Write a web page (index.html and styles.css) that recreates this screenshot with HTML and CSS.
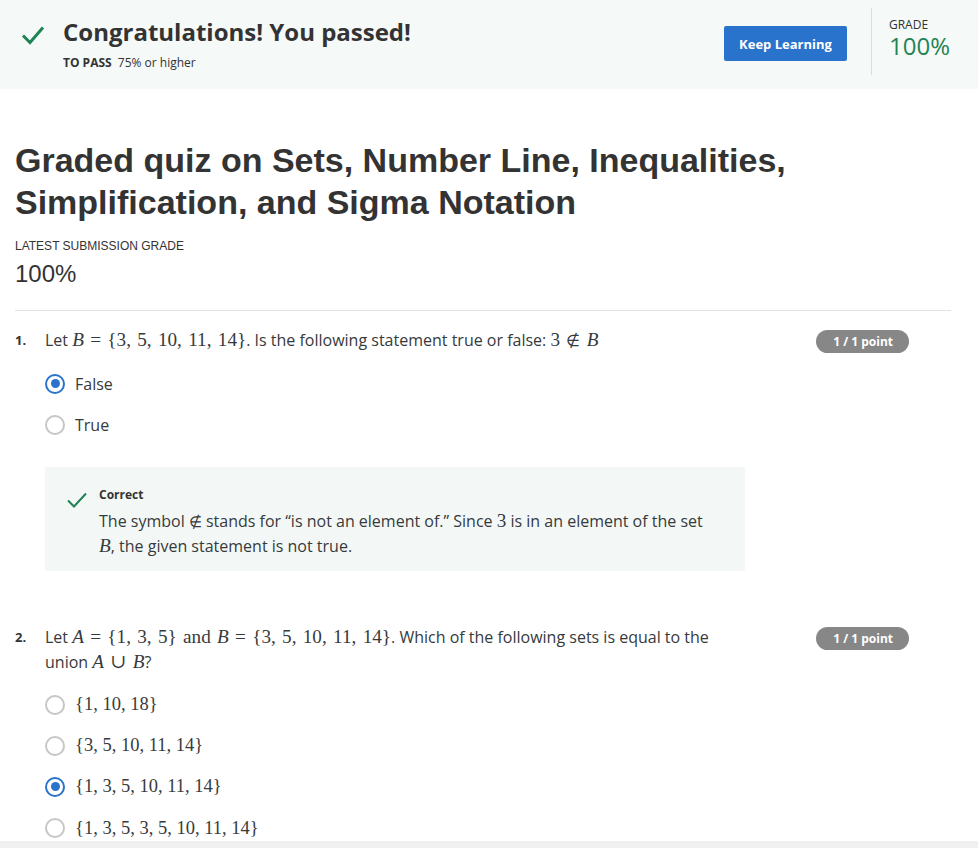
FILE: index.html
```html
<!DOCTYPE html>
<html lang="en">
<head>
<meta charset="utf-8">
<title>Graded quiz</title>
<link rel="stylesheet" href="styles.css">
</head>
<body>
<header class="banner">
  <div class="banner-main">
    <svg class="big-check" width="26" height="26" viewBox="0 0 26 26"><path d="M3 13.5 L10 20.5 L23 5.5" fill="none" stroke="#1f8354" stroke-width="3"/></svg>
    <div class="banner-text">
      <h2 class="passed">Congratulations! You passed!</h2>
      <div class="topass"><span class="topass-label">TO PASS</span> 75% or higher</div>
    </div>
  </div>
  <button class="keep">Keep Learning</button>
  <div class="grade-box">
    <div class="grade-label">GRADE</div>
    <div class="grade-val">100%</div>
  </div>
</header>

<main class="content">
  <h1 class="quiz-title">Graded quiz on Sets, Number Line, Inequalities, Simplification, and Sigma Notation</h1>
  <div class="latest-label">LATEST SUBMISSION GRADE</div>
  <div class="latest-val">100%</div>
  <hr class="divider">

  <section class="question">
    <div class="q-head">
      <span class="q-num">1.</span>
      <div class="q-text">Let <span class="m"><i>B</i> = {3, 5, 10, 11, 14}</span>. Is the following statement true or false: <span class="m">3 <span class="rel">∉</span> <i>B</i></span></div>
      <span class="badge">1 / 1 point</span>
    </div>
    <ul class="options">
      <li class="option"><span class="radio checked"></span><span class="opt-text">False</span></li>
      <li class="option"><span class="radio"></span><span class="opt-text">True</span></li>
    </ul>
    <div class="feedback">
      <svg class="small-check" width="22" height="22" viewBox="0 0 22 22"><path d="M2 11.5 L8 17.5 L20 4.5" fill="none" stroke="#1f8354" stroke-width="2"/></svg>
      <div class="fb-body">
        <div class="fb-title">Correct</div>
        <p class="fb-text">The symbol <span class="m rel">∉</span> stands for “is not an element of.” Since <span class="m">3</span> is in an element of the set <span class="m"><i>B</i></span>, the given statement is not true.</p>
      </div>
    </div>
  </section>

  <section class="question q2">
    <div class="q-head">
      <span class="q-num">2.</span>
      <div class="q-text">Let <span class="m"><i>A</i> = {1, 3, 5} and <i>B</i> = {3, 5, 10, 11, 14}</span>. Which of the following sets is equal to the union <span class="m"><i>A</i> ∪ <i>B</i></span>?</div>
      <span class="badge">1 / 1 point</span>
    </div>
    <ul class="options">
      <li class="option"><span class="radio"></span><span class="opt-text m">{1, 10, 18}</span></li>
      <li class="option"><span class="radio"></span><span class="opt-text m">{3, 5, 10, 11, 14}</span></li>
      <li class="option"><span class="radio checked"></span><span class="opt-text m">{1, 3, 5, 10, 11, 14}</span></li>
      <li class="option"><span class="radio"></span><span class="opt-text m">{1, 3, 5, 3, 5, 10, 11, 14}</span></li>
    </ul>
  </section>
</main>
<footer class="bottom-strip"></footer>
</body>
</html>
```

FILE: styles.css
```css
* { box-sizing: border-box; }
html, body { margin: 0; padding: 0; }
body {
  width: 978px;
  height: 848px;
  overflow: hidden;
  font-family: "Open Sans", "Liberation Sans", sans-serif;
  color: #373a3c;
  background: #fff;
  position: relative;
}

.banner {
  height: 89px;
  background: #f5f9f8;
  display: flex;
  align-items: flex-start;
  padding: 0 28px 0 20px;
}
.banner-main {
  flex: 1;
  display: flex;
  align-items: flex-start;
  padding-top: 20px;
}
.big-check { margin-top: 2px; margin-right: 17px; flex: none; }
.passed {
  margin: 0;
  font-size: 24px;
  line-height: 24px;
  font-weight: 700;
  color: #333;
}
.topass {
  margin-top: 10px;
  font-size: 12px;
  color: #333;
}
.topass-label { font-weight: 700; margin-right: 3px; }

.keep {
  margin-top: 26px;
  width: 123px;
  height: 35px;
  background: #2a73cc;
  color: #fff;
  border: none;
  border-radius: 2px;
  font-family: "Open Sans", sans-serif;
  font-weight: 700;
  font-size: 13px;
  padding: 0;
}
.grade-box {
  margin-top: 8px;
  margin-left: 24px;
  height: 67px;
  border-left: 1px solid #dcdcdc;
  padding-left: 17px;
  padding-top: 10px;
}
.grade-label { font-size: 12px; color: #333; line-height: 14px; }
.grade-val { font-size: 24px; color: #1f8354; line-height: 28px; margin-top: 0; }

.content { padding: 0 27px 0 15px; }
.quiz-title {
  margin: 50px 0 0;
  font-family: "Liberation Sans", Arial, sans-serif;
  font-size: 34px;
  line-height: 42px;
  font-weight: 700;
  color: #333;
  width: 800px;
}
.latest-label {
  margin-top: 16px;
  font-family: "Liberation Sans", Arial, sans-serif;
  font-size: 12px;
  color: #333;
}
.latest-val {
  margin-top: 7px;
  font-family: "Liberation Sans", Arial, sans-serif;
  font-size: 24px;
  color: #333;
}
.divider {
  border: none;
  border-top: 1px solid #e1e1e1;
  margin: 22px 0 0;
}

.question { padding-top: 17px; }
.q2 { padding-top: 54px; }
.q-head { display: flex; align-items: flex-start; }
.q-num {
  width: 30px;
  flex: none;
  font-size: 13px;
  font-weight: 700;
  line-height: 24px;
  color: #333;
}
.q-text {
  width: 680px;
  font-size: 16px;
  line-height: 25px;
  color: #373a3c;
}
.badge {
  margin-left: auto;
  margin-right: 42px;
  margin-top: 2px;
  background: #878787;
  color: #fff;
  font-size: 12px;
  font-weight: 700;
  border-radius: 12px;
  height: 23px;
  line-height: 23px;
  padding: 0 16px 0 17px;
  white-space: nowrap;
  flex: none;
}
.m { font-family: "Liberation Serif", "DejaVu Serif", serif; font-size: 1.2em; }
.m .m { font-size: 1em; }
.q-text .m { word-spacing: 1.5px; line-height: 20px; }
.rel { font-family: "DejaVu Sans", sans-serif; font-weight: 300; font-size: 0.95em; }
.m .rel { font-size: 0.85em; }
.options { list-style: none; margin: 18px 0 0 30px; padding: 0; display: flex; flex-direction: column; gap: 16px; }
.q2 .options { margin-top: 17px; gap: 16.2px; }
.option { display: flex; align-items: center; height: 25px; }
.radio {
  width: 20px; height: 20px; border-radius: 50%;
  border: 2px solid #c6c6c6;
  flex: none;
  margin-right: 10px;
  position: relative;
}
.radio.checked { border: 2.5px solid #2a73cc; }
.radio.checked::after {
  content: "";
  position: absolute;
  left: 50%; top: 50%;
  width: 9px; height: 9px;
  margin: -4.5px 0 0 -4.5px;
  border-radius: 50%;
  background: #2a73cc;
}
.opt-text { font-size: 16px; color: #373a3c; }
.opt-text.m { font-size: 18.5px; }

.feedback {
  margin: 30px 0 0 30px;
  width: 700px;
  height: 104px;
  background: #f3f8f6;
  display: flex;
  align-items: flex-start;
  padding: 18px 0 0 21px;
}
.small-check { margin-top: 4px; margin-right: 11px; flex: none; }
.fb-title { font-size: 12px; font-weight: 700; color: #333; line-height: 20px; }
.fb-text { margin: 4px 0 0; font-size: 16px; line-height: 24px; width: 620px; color: #373a3c; }

.bottom-strip {
  position: absolute;
  left: 0; right: 0; bottom: 0;
  height: 7px;
  background: #f0f0f0;
}
```
